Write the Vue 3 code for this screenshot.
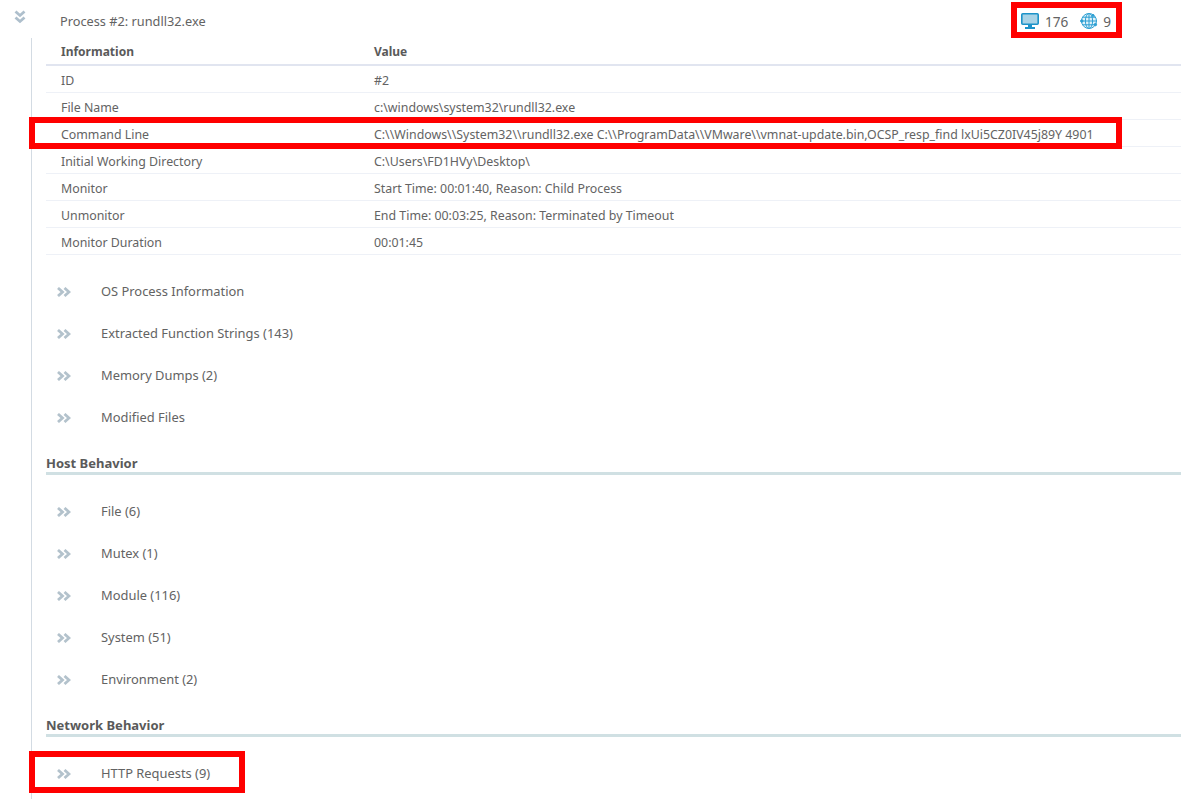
<template>
  <div class="page">
    <header class="proc">
      <svg class="toggle" width="12" height="14" viewBox="0 0 12 14">
        <path d="M1.5 1.5 6 5.5 10.5 1.5M1.5 7.5 6 11.5 10.5 7.5" fill="none" stroke="#aebfcc" stroke-width="2.8" />
      </svg>
      <span class="proc-title">Process #2: rundll32.exe</span>
      <div class="stats">
        <svg width="18" height="16" viewBox="0 0 18 16">
          <rect x="0.8" y="0.8" width="16.4" height="10.4" rx="1" fill="#a8d3e6" stroke="#1c93c9" stroke-width="1.6" />
          <rect x="7" y="12" width="4" height="2" fill="#1c93c9" />
          <rect x="4" y="14" width="10" height="2" fill="#1c93c9" />
        </svg>
        <span class="stat-num first">176</span>
        <svg class="globe" width="18" height="18" viewBox="0 0 18 18" fill="#dff1f9" stroke="#2b9fd3" stroke-width="1">
          <circle cx="9" cy="9" r="7.5" />
          <ellipse cx="9" cy="9" rx="3.6" ry="7.5" />
          <path d="M9 1.5v15M1.5 9h15M2.6 5.2h12.8M2.6 12.8h12.8" fill="none" />
          <circle cx="1.8" cy="9" r="1.2" fill="#2b9fd3" />
          <circle cx="15.4" cy="12.6" r="1.2" fill="#2b9fd3" />
          <circle cx="13" cy="3.4" r="1" fill="#2b9fd3" />
        </svg>
        <span class="stat-num">9</span>
      </div>
    </header>
    <main class="body">
      <div class="table">
        <div class="row head">
          <span class="key">Information</span>
          <span>Value</span>
        </div>
        <div v-for="r in rows" :key="r[0]" class="row">
          <span class="key">{{ r[0] }}</span>
          <span>{{ r[1] }}</span>
        </div>
      </div>
      <ul class="list first-list">
        <li v-for="i in info" :key="i"><Chev /><span class="label">{{ i }}</span></li>
      </ul>
      <h2>Host Behavior</h2>
      <ul class="list">
        <li v-for="i in host" :key="i"><Chev /><span class="label">{{ i }}</span></li>
      </ul>
      <h2>Network Behavior</h2>
      <ul class="list">
        <li v-for="i in net" :key="i"><Chev /><span class="label">{{ i }}</span></li>
      </ul>
    </main>
    <div class="mark mark-stats"></div>
    <div class="mark mark-cmd"></div>
    <div class="mark mark-http"></div>
  </div>
</template>

<script setup>
import { h } from 'vue'

const Chev = () =>
  h('svg', { class: 'chev', width: 14, height: 10, viewBox: '0 0 14 10' }, [
    h('path', {
      d: 'M1 1 5.5 5 1 9M7.5 1 12 5 7.5 9',
      fill: 'none',
      stroke: '#b3c2cc',
      'stroke-width': 2.8
    })
  ])

const rows = [
  ['ID', '#2'],
  ['File Name', 'c:\\windows\\system32\\rundll32.exe'],
  ['Command Line', 'C:\\\\Windows\\\\System32\\\\rundll32.exe C:\\\\ProgramData\\\\VMware\\\\vmnat-update.bin,OCSP_resp_find lxUi5CZ0IV45j89Y 4901'],
  ['Initial Working Directory', 'C:\\Users\\FD1HVy\\Desktop\\'],
  ['Monitor', 'Start Time: 00:01:40, Reason: Child Process'],
  ['Unmonitor', 'End Time: 00:03:25, Reason: Terminated by Timeout'],
  ['Monitor Duration', '00:01:45']
]
const info = ['OS Process Information', 'Extracted Function Strings (143)', 'Memory Dumps (2)', 'Modified Files']
const host = ['File (6)', 'Mutex (1)', 'Module (116)', 'System (51)', 'Environment (2)']
const net = ['HTTP Requests (9)']
</script>

<style>
html, body { margin: 0; background: #fff; }
</style>

<style scoped>
.page {
  position: relative;
  width: 1200px;
  height: 799px;
  overflow: hidden;
  font-family: "Noto Sans", "Open Sans", sans-serif;
  font-size: 12.36px;
  color: #636363;
}
.proc {
  display: flex;
  align-items: center;
  height: 38px;
  padding: 0 0 0 14px;
  box-sizing: border-box;
}
.toggle { margin-top: -4px; }
.proc-title { margin-left: 34px; margin-top: 4px; font-size: 12.76px; }
.stats {
  display: flex;
  align-items: center;
  margin-left: auto;
  margin-right: 89px;
  margin-top: 4px;
  font-size: 13.6px;
}
.stat-num { margin-left: 5px; }
.stat-num.first { margin-left: 6px; margin-right: 12px; }
.body {
  margin-left: 31px;
  width: 1150px;
  border-left: 1px solid #d3dbe3;
  padding-left: 14px;
  box-sizing: border-box;
  height: 761px;
}
.row {
  display: grid;
  grid-template-columns: 313px 1fr;
  align-items: center;
  height: 27px;
  padding-left: 15px;
  padding-top: 2px;
  border-bottom: 1px solid #eef1f7;
  box-sizing: border-box;
}
.row.head {
  height: 28px;
  padding-top: 0;
  font-size: 12px;
  font-weight: 700;
  color: #5a5a5a;
  border-bottom: 2px solid #e1e5f0;
}
.list {
  list-style: none;
  margin: 0;
  padding: 0;
}
.first-list { margin-top: 16px; }
.list li {
  display: flex;
  align-items: center;
  height: 42px;
  padding-left: 11px;
  font-size: 12.9px;
}
.label { margin-top: -2px; }
.chev { margin-right: 30px; }
h2 {
  margin: 14px 0 16px;
  height: 19px;
  font-size: 13px;
  line-height: 21px;
  font-weight: 700;
  color: #5a5a5a;
  border-bottom: 3px solid #d0e0e3;
  box-sizing: content-box;
}
.mark {
  position: absolute;
  border: 6px solid #f00;
  box-sizing: border-box;
  pointer-events: none;
}
.mark-stats { left: 1011px; top: 2px; width: 111px; height: 36px; }
.mark-cmd { left: 29px; top: 117px; width: 1093px; height: 32px; }
.mark-http { left: 29px; top: 751px; width: 216px; height: 42px; }
</style>
